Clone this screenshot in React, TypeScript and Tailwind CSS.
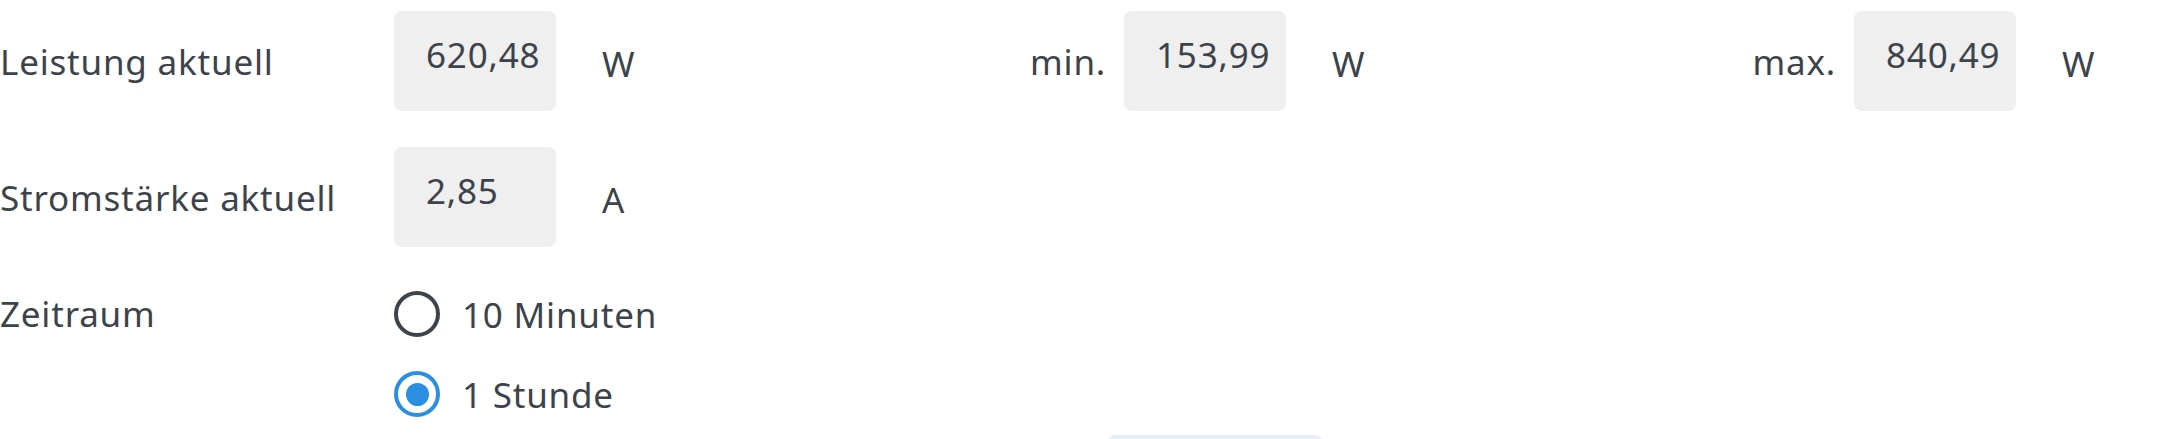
const valueBox = "flex h-[100px] w-[162px] items-center rounded-[8px] bg-[#efefef] pl-[32px] pb-[14px]";

function Metric({ label, value, unit, labelRight }: { label: string; value: string; unit: string; labelRight?: boolean }) {
  return (
    <div className="flex items-center">
      <div className={labelRight ? "w-[394px] pr-[18px] text-right" : "w-[394px]"}>{label}</div>
      <div className={valueBox}>{value}</div>
      <div className="w-[174px] pl-[46px] pt-[4px]">{unit}</div>
    </div>
  );
}

function Radio({ label, checked }: { label: string; checked?: boolean }) {
  return (
    <label className="flex h-[46px] items-center gap-[22px]">
      {checked ? (
        <span className="flex h-[46px] w-[46px] items-center justify-center rounded-full border-[4px] border-[#2a8fe0]">
          <span className="h-[23px] w-[23px] rounded-full bg-[#2a8fe0]" />
        </span>
      ) : (
        <span className="h-[46px] w-[46px] rounded-full border-[4px] border-[#3c434a]" />
      )}
      <span>{label}</span>
    </label>
  );
}

export default function App() {
  return (
    <div className="h-[439px] overflow-hidden bg-white pt-[11px] font-['Noto_Sans',sans-serif] text-[35px] leading-none tracking-[0.8px] text-[#3c434a]">
      <div className="flex">
        <Metric label="Leistung aktuell" value="620,48" unit="W" />
        <Metric label="min." value="153,99" unit="W" labelRight />
        <Metric label="max." value="840,49" unit="W" labelRight />
      </div>

      <div className="mt-[36px] flex">
        <Metric label="Stromstärke aktuell" value="2,85" unit="A" />
      </div>

      <div className="mt-[44px] flex">
        <div className="w-[394px] pt-[5px]">Zeitraum</div>
        <div className="flex flex-col gap-[34px]">
          <Radio label="10 Minuten" />
          <Radio label="1 Stunde" checked />
        </div>
      </div>

      <div className="mt-[18px] ml-[1107px] h-[40px] w-[216px] rounded-[8px] bg-[#e6eef6]" />
    </div>
  );
}
